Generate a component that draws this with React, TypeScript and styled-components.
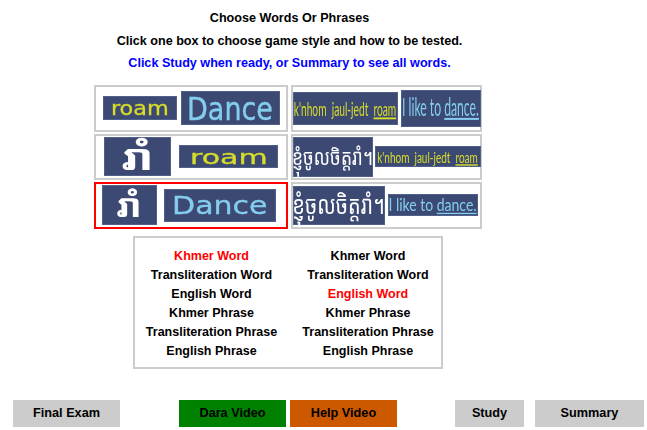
import { createGlobalStyle, styled } from "styled-components";

const GlobalStyle = createGlobalStyle`
  html, body {
    margin: 0;
    padding: 0;
    background: #fff;
  }
  body {
    font-family: "Liberation Sans", Arial, sans-serif;
  }
`;

const Page = styled.div`
  width: 647px;
  height: 430px;
  display: flex;
  flex-direction: column;
  overflow: hidden;
`;

const Main = styled.div`
  width: 576px;
  display: flex;
  flex-direction: column;
  align-items: center;
  padding-top: 7px;
`;

const Title = styled.div<{ $blue?: boolean }>`
  height: 22.5px;
  line-height: 22.5px;
  padding-left: 3px;
  font-size: 12.6px;
  font-weight: 700;
  white-space: nowrap;
  color: ${(p) => (p.$blue ? "#0000ff" : "#000")};
`;

const Grid = styled.div`
  margin-top: 10px;
  display: grid;
  grid-template-columns: 194px 191px;
  grid-template-rows: 47px 46px 47px;
  column-gap: 3px;
  row-gap: 2px;
`;

const Cell = styled.div<{ $gap: number; $right?: number; $selected?: boolean }>`
  box-sizing: border-box;
  display: flex;
  align-items: center;
  justify-content: center;
  gap: ${(p) => p.$gap}px;
  padding-right: ${(p) => p.$right ?? 0}px;
  border: 2px solid ${(p) => (p.$selected ? "#ff0000" : "#cccccc")};
`;

const Tile = styled.div<{ $w: number; $h: number }>`
  flex: none;
  width: ${(p) => p.$w}px;
  height: ${(p) => p.$h}px;
  display: flex;
  align-items: center;
  justify-content: center;
  background: #3c4a73;
  box-shadow: inset 0 0 0 1px #50608a;
  white-space: nowrap;
  line-height: 1;
`;

const Latin = styled.span<{ $size: number; $color: string; $x?: number; $y?: number }>`
  display: inline-block;
  font-family: "DejaVu Sans", sans-serif;
  font-size: ${(p) => p.$size}px;
  color: ${(p) => p.$color};
  -webkit-text-stroke: 0.3px ${(p) => p.$color};
  transform: scale(${(p) => p.$x ?? 1}, ${(p) => p.$y ?? 1});
  filter: blur(0.35px);
`;

const Slim = styled(Latin)`
  font-family: Lato, "DejaVu Sans", sans-serif;
  -webkit-text-stroke: 0;
`;

const Under = styled.span`
  text-decoration: underline;
  text-decoration-thickness: 1px;
`;

const Khmer = styled.span<{ $size: number; $x?: number; $y?: number; $bold?: boolean }>`
  display: inline-block;
  font-family: "Noto Sans Khmer", "Khmer OS", "DejaVu Sans", sans-serif;
  font-size: ${(p) => p.$size}px;
  font-weight: ${(p) => (p.$bold ? 700 : 400)};
  color: #ffffff;
  transform: scale(${(p) => p.$x ?? 1}, ${(p) => p.$y ?? 1});
  filter: blur(0.35px);
`;

const WordBox = styled.div`
  box-sizing: border-box;
  margin-top: 7px;
  width: 310px;
  height: 133px;
  border: 2px solid #cccccc;
  padding-top: 9px;
  display: grid;
  grid-template-columns: 153px 153px;
  column-gap: 3.5px;
`;

const WordColumn = styled.div`
  display: flex;
  flex-direction: column;
  align-items: center;
`;

const Word = styled.div<{ $active?: boolean }>`
  height: 19px;
  line-height: 19px;
  font-size: 12.5px;
  font-weight: 700;
  white-space: nowrap;
  color: ${(p) => (p.$active ? "#ff0000" : "#000")};
`;

const Footer = styled.div`
  margin-top: 31px;
  padding-left: 13px;
  display: flex;
`;

const Button = styled.div<{ $w: number; $bg?: string; $left?: number }>`
  box-sizing: border-box;
  width: ${(p) => p.$w}px;
  height: 27px;
  margin-left: ${(p) => p.$left ?? 0}px;
  display: flex;
  align-items: center;
  justify-content: center;
  background: ${(p) => p.$bg ?? "#cccccc"};
  font-size: 12.7px;
  font-weight: 700;
  color: #000;
`;

const words = [
  "Khmer Word",
  "Transliteration Word",
  "English Word",
  "Khmer Phrase",
  "Transliteration Phrase",
  "English Phrase",
];

const YELLOW = "#d8dc2a";
const BLUE = "#84cdee";
const KHMER_WORD = "រាំ";
const KHMER_PHRASE = "ខ្ញុំចូលចិត្តរាំ។";

export default function App() {
  return (
    <Page>
      <GlobalStyle />
      <Main>
        <Title>Choose Words Or Phrases</Title>
        <Title>Click one box to choose game style and how to be tested.</Title>
        <Title $blue>Click Study when ready, or Summary to see all words.</Title>
        <Grid>
          <Cell $gap={4}>
            <Tile $w={74} $h={24}>
              <Latin $size={20} $color={YELLOW} $x={1.12}>roam</Latin>
            </Tile>
            <Tile $w={99} $h={34}>
              <Latin $size={27} $color={BLUE} $y={1.2}>Dance</Latin>
            </Tile>
          </Cell>
          <Cell $gap={3}>
            <Tile $w={105} $h={33}>
              <Slim $size={10.2} $color={YELLOW} $y={1.9}>
                k'nhom&nbsp; jaul-jedt&nbsp; <Under>roam</Under>
              </Slim>
            </Tile>
            <Tile $w={80} $h={37}>
              <Slim $size={12.2} $color={BLUE} $y={2}>
                I like to <Under>dance.</Under>
              </Slim>
            </Tile>
          </Cell>
          <Cell $gap={8}>
            <Tile $w={67} $h={39}>
              <Khmer $size={36} $x={1.35} $bold>{KHMER_WORD}</Khmer>
            </Tile>
            <Tile $w={99} $h={23}>
              <Latin $size={20} $color={YELLOW} $x={1.5}>roam</Latin>
            </Tile>
          </Cell>
          <Cell $gap={2}>
            <Tile $w={80} $h={40}>
              <Khmer $size={17.5} $y={1.3}>{KHMER_PHRASE}</Khmer>
            </Tile>
            <Tile $w={106} $h={21}>
              <Slim $size={10} $color={YELLOW} $y={1.45}>
                k'nhom&nbsp; jaul-jedt&nbsp; <Under>roam</Under>
              </Slim>
            </Tile>
          </Cell>
          <Cell $gap={7} $right={5} $selected>
            <Tile $w={55} $h={40}>
              <Khmer $size={32} $x={1.2} $bold>{KHMER_WORD}</Khmer>
            </Tile>
            <Tile $w={112} $h={33}>
              <Latin $size={25} $color={BLUE} $x={1.2}>Dance</Latin>
            </Tile>
          </Cell>
          <Cell $gap={3} $right={3}>
            <Tile $w={92} $h={39}>
              <Khmer $size={20} $y={1.3}>{KHMER_PHRASE}</Khmer>
            </Tile>
            <Tile $w={90} $h={22}>
              <Slim $size={14} $color={BLUE} $y={1.3}>
                I like to <Under>dance.</Under>
              </Slim>
            </Tile>
          </Cell>
        </Grid>
        <WordBox>
          <WordColumn>
            {words.map((w, i) => (
              <Word key={w} $active={i === 0}>{w}</Word>
            ))}
          </WordColumn>
          <WordColumn>
            {words.map((w, i) => (
              <Word key={w} $active={i === 2}>{w}</Word>
            ))}
          </WordColumn>
        </WordBox>
      </Main>
      <Footer>
        <Button $w={107}>Final Exam</Button>
        <Button $w={107} $bg="#008000" $left={59}>Dara Video</Button>
        <Button $w={107} $bg="#cc5800" $left={4}>Help Video</Button>
        <Button $w={69} $left={58}>Study</Button>
        <Button $w={109} $left={11}>Summary</Button>
      </Footer>
    </Page>
  );
}
